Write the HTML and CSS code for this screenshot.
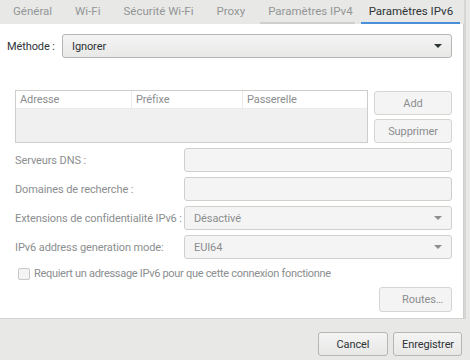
FILE: index.html
```html
<!DOCTYPE html>
<html>
<head>
  <meta charset="UTF-8">
  <title>Paramètres IPv6</title>
  <link rel="stylesheet" href="styles.css">
</head>
<body>
  <div class="window">
    <div class="main">
      <nav class="tabs">
        <a href="#">Général</a>
        <a href="#">Wi-Fi</a>
        <a href="#">Sécurité Wi-Fi</a>
        <a href="#">Proxy</a>
        <a href="#" class="prev">Paramètres IPv4</a>
        <a href="#" class="active">Paramètres IPv6</a>
      </nav>
      <div class="page">
        <div class="method-row">
          <label>Méthode :</label>
          <div class="combo active-combo">
            <span>Ignorer</span>
            <span class="arrow"></span>
          </div>
        </div>

        <div class="address-row">
          <div class="address-table">
            <div class="table-head">
              <span>Adresse</span>
              <span>Préfixe</span>
              <span>Passerelle</span>
            </div>
            <div class="table-body"></div>
          </div>
          <div class="address-buttons">
            <button class="btn" disabled>Add</button>
            <button class="btn" disabled>Supprimer</button>
          </div>
        </div>

        <div class="form-grid">
          <label>Serveurs DNS :</label>
          <div class="entry"></div>
          <label>Domaines de recherche :</label>
          <div class="entry"></div>
          <label>Extensions de confidentialité IPv6 :</label>
          <div class="combo">
            <span>Désactivé</span>
            <span class="arrow"></span>
          </div>
          <label>IPv6 address generation mode:</label>
          <div class="combo">
            <span>EUI64</span>
            <span class="arrow"></span>
          </div>
        </div>

        <div class="check-row">
          <span class="checkbox"></span>
          <span class="check-label">Requiert un adressage IPv6 pour que cette connexion fonctionne</span>
        </div>

        <div class="routes-row">
          <button class="btn routes" disabled>Routes…</button>
        </div>
      </div>
    </div>
    <div class="side"></div>
  </div>
  <div class="actions">
    <button class="btn action">Cancel</button>
    <button class="btn action">Enregistrer</button>
  </div>
</body>
</html>
```

FILE: styles.css
```css
body {
  margin: 0;
  width: 470px;
  height: 360px;
  overflow: hidden;
  font-family: 'Roboto', 'Liberation Sans', sans-serif;
  font-size: 11px;
  letter-spacing: -0.1px;
  white-space: nowrap;
  color: #2e3436;
  background-color: #e8e8e7;
}

.window {
  display: flex;
}

.main {
  width: 464px;
}

.side {
  flex: 1;
  border-left: 2px solid #d6d6d4;
}

.tabs {
  display: flex;
  height: 24px;
  padding-left: 5px;
  background-color: #e8e8e7;
  font-size: 11.5px;
  letter-spacing: 0;
}

.tabs a {
  padding: 0 8px;
  margin-right: 7px;
  line-height: 23px;
  color: #939696;
  text-decoration: none;
  border-bottom: 1px solid transparent;
}

.tabs a.prev {
  border-bottom: 2px solid #cfcfcd;
  line-height: 22px;
  margin-right: 0;
  padding-right: 2px;
  margin-right: 6px;
}

.tabs a.active {
  color: #2e3436;
  border-bottom: 2px solid #4a90d9;
  line-height: 22px;
  padding: 0 7px 0 8px;
  margin-right: 0;
}

.page {
  background-color: #ffffff;
  border-right: 1px solid #cdcdca;
  border-bottom: 1px solid #d3d3d0;
  padding: 10px 11px 0 15px;
  box-sizing: border-box;
  height: 295px;
}

.method-row {
  display: flex;
  align-items: center;
  margin-left: -8px;
  gap: 9px;
}

.method-row label {
  width: 46px;
}

.combo {
  flex: 1;
  display: flex;
  align-items: center;
  justify-content: space-between;
  height: 24px;
  padding: 0 9px;
  box-sizing: border-box;
  border: 1px solid #cfcfcc;
  border-radius: 3px;
  background-color: #f4f4f4;
  color: #8b8e8f;
}

.active-combo {
  color: #2e3436;
  border-color: #b6b6b3;
  background: linear-gradient(#f4f4f4, #e8e8e7);
}

.arrow {
  width: 0;
  height: 0;
  border-left: 4px solid transparent;
  border-right: 4px solid transparent;
  border-top: 4px solid #8b8e8f;
}

.active-combo .arrow {
  border-top-color: #2e3436;
}

.address-row {
  display: flex;
  gap: 6px;
  margin-top: 32px;
}

.address-table {
  width: 354px;
  height: 53px;
  border: 1px solid #cdcdca;
  box-sizing: border-box;
  display: flex;
  flex-direction: column;
}

.table-head {
  display: grid;
  grid-template-columns: 115px 111px 1fr;
  height: 17px;
  background-color: #ffffff;
  color: #8b8e8f;
  border-bottom: 1px solid #ebebea;
}

.table-head span {
  padding-left: 4px;
  line-height: 17px;
  border-left: 1px solid #ebebea;
}

.table-head span:first-child {
  border-left: none;
}

.table-body {
  flex: 1;
  background-color: #f0f0f0;
}

.address-buttons {
  display: flex;
  flex-direction: column;
  gap: 4px;
  padding-top: 1px;
}

.btn {
  font-family: inherit;
  font-size: 11px;
  letter-spacing: -0.1px;
  height: 24px;
  border: 1px solid #b6b6b3;
  border-radius: 3px;
  background: linear-gradient(#f4f4f4, #e8e8e7);
  color: #2e3436;
  padding: 0 8px;
}

.btn[disabled] {
  background: #f4f4f4;
  border-color: #d5d5d2;
  color: #8b8e8f;
}

.address-buttons .btn {
  width: 78px;
}

.form-grid {
  display: grid;
  grid-template-columns: 169px 1fr;
  grid-auto-rows: 24px;
  row-gap: 5px;
  margin-top: 5px;
  color: #8b8e8f;
}

.form-grid label {
  line-height: 25px;
}

.entry {
  border: 1px solid #cfcfcc;
  border-radius: 3px;
  background-color: #f4f4f4;
}

.check-row {
  display: flex;
  align-items: center;
  gap: 4px;
  margin: 8px 0 0 3px;
  color: #8b8e8f;
}

.check-label {
  letter-spacing: -0.3px;
}

.checkbox {
  width: 10px;
  height: 10px;
  border: 1px solid #c8c8c5;
  border-radius: 2px;
  background-color: #f4f4f4;
}

.routes-row {
  display: flex;
  justify-content: flex-end;
  margin-top: 7px;
}

.routes {
  width: 73px;
  text-align: right;
  height: 25px;
}

.actions {
  display: flex;
  justify-content: flex-end;
  gap: 5px;
  padding: 13px 8px 0 0;
}

.action {
  height: 24px;
}

.action:first-child {
  width: 70px;
}

.action:last-child {
  width: 69px;
}
```
